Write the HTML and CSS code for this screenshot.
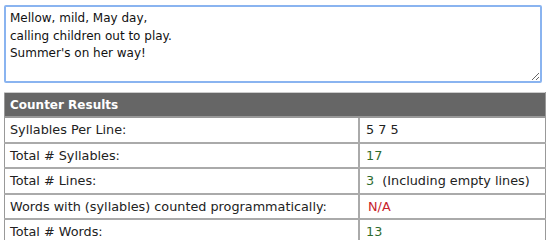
FILE: index.html
```html
<!DOCTYPE html>
<html lang="en">
<head>
    <meta charset="UTF-8">
    <title>Haiku Syllable Counter</title>
    <link rel="stylesheet" href="styles.css">
</head>
<body>
    <textarea class="poem" aria-label="Poem text">Mellow, mild, May day,
calling children out to play.
Summer's on her way!</textarea>

    <table class="results">
        <thead>
            <tr><th colspan="2">Counter Results</th></tr>
        </thead>
        <tbody>
            <tr>
                <td class="label">Syllables Per Line:</td>
                <td class="value">5 7 5</td>
            </tr>
            <tr>
                <td class="label">Total # Syllables:</td>
                <td class="value"><span class="num">17</span></td>
            </tr>
            <tr>
                <td class="label">Total # Lines:</td>
                <td class="value"><span class="num">3</span>&nbsp; (Including empty lines)</td>
            </tr>
            <tr>
                <td class="label">Words with (syllables) counted programmatically:</td>
                <td class="value"><span class="na">N/A</span></td>
            </tr>
            <tr>
                <td class="label">Total # Words:</td>
                <td class="value"><span class="num">13</span></td>
            </tr>
        </tbody>
    </table>

    <script>
        const poem = document.querySelector('.poem');
        poem.focus();
        poem.setSelectionRange(poem.value.length, poem.value.length);
    </script>
</body>
</html>
```

FILE: styles.css
```css
body {
    margin: 0;
    padding: 4px;
    font-family: "DejaVu Sans", Verdana, sans-serif;
    font-size: 12.8px;
    color: #222;
    background: #fff;
}

.poem {
    display: block;
    box-sizing: border-box;
    width: 538px;
    height: 78px;
    margin: 1px 0 0;
    padding: 3px 4px 2px;
    border: 2px solid #8ab4f0;
    border-radius: 2px;
    outline: none;
    font-family: "DejaVu Sans", Verdana, sans-serif;
    font-size: 12px;
    line-height: 17.5px;
    color: #111;
    caret-color: #111;
    resize: vertical;
}

.results {
    width: 542px;
    margin-top: 9px;
    border-collapse: collapse;
    border: 1px solid #999;
    border-top: 1px solid #ccc;
}

.results th {
    background: #666;
    color: #fff;
    text-align: left;
    font-weight: bold;
    font-size: 12px;
    height: 23px;
    padding: 0 5px;
    border-bottom: 2px solid #999;
}

.results td {
    height: 23.5px;
    padding: 0 5px;
    border-bottom: 2px solid #aaa;
    color: #222;
}

.results td.label {
    width: 343px;
    border-right: 2px solid #aaa;
}

.results td.value {
    padding-left: 6px;
}

.num {
    color: #2e6b2e;
}

.na {
    color: #c8232c;
    padding-left: 2px;
}
```
